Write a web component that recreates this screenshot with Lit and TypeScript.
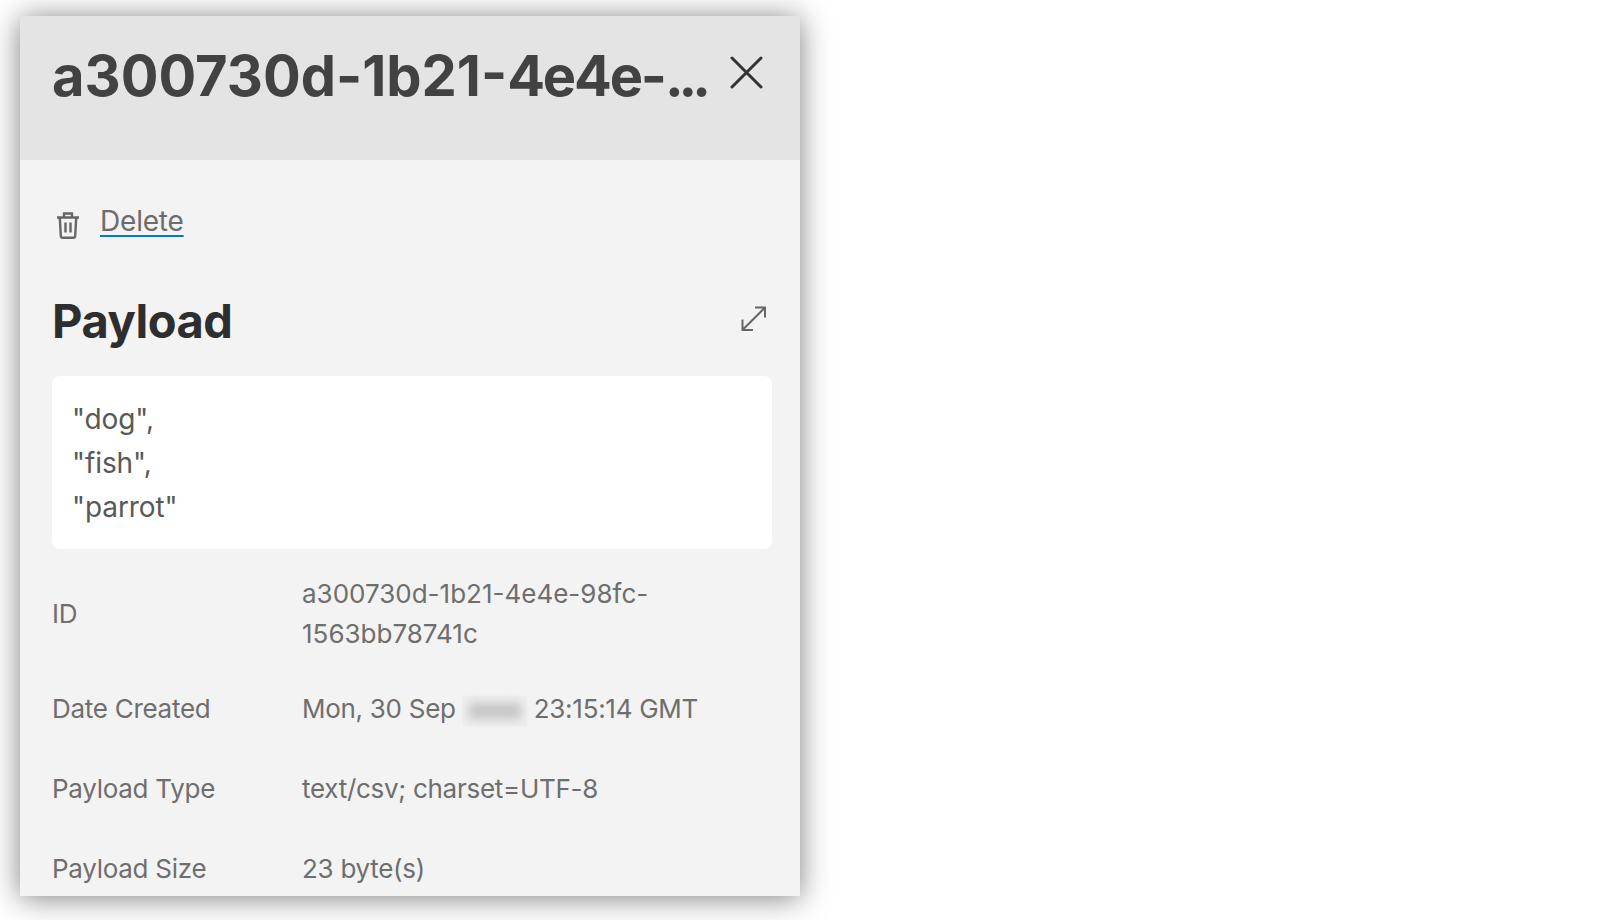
import { LitElement, html, css } from 'lit';
import { customElement, state } from 'lit/decorators.js';

interface Detail {
  label: string;
  value: string;
}

@customElement('app-root')
export class AppRoot extends LitElement {
  static override styles = css`
    :host {
      display: block;
      height: 920px;
      overflow: hidden;
      background: #fff;
      font-family: Inter, 'Liberation Sans', sans-serif;
    }

    .panel {
      width: 780px;
      height: 880px;
      margin: 16px 0 0 20px;
      overflow: hidden;
      background: #f3f3f3;
      box-shadow: 0 2px 28px rgba(0, 0, 0, 0.5);
    }

    header {
      display: flex;
      justify-content: space-between;
      box-sizing: border-box;
      height: 144px;
      padding: 28px 37px 0 32px;
      background: #e4e4e4;
    }

    h1 {
      margin: 0;
      font-size: 56px;
      font-weight: 700;
      line-height: 64px;
      color: #424242;
      white-space: nowrap;
    }

    h1 .tail {
      letter-spacing: -2.2px;
    }

    h1 .dots {
      letter-spacing: -5px;
    }

    .close {
      width: 33px;
      height: 33px;
      margin-top: 12px;
    }

    .content {
      padding: 0 28px 0 32px;
    }

    .delete {
      display: flex;
      align-items: flex-start;
      gap: 21px;
      padding: 0 0 0 5px;
      margin-top: 43px;
      font-size: 28px;
      line-height: 36px;
      letter-spacing: -0.2px;
      color: #6c6c6c;
    }

    .delete svg {
      margin-top: 9px;
      color: #666;
    }

    .delete span {
      text-decoration: underline 2px #0078d4;
      text-underline-offset: 4px;
    }

    .title-row {
      display: flex;
      justify-content: space-between;
      align-items: center;
      margin-top: 52px;
    }

    h2 {
      margin: 0;
      font-size: 47px;
      font-weight: 700;
      line-height: 60px;
      letter-spacing: -0.45px;
      color: #2e2e2e;
    }

    .expand {
      margin: 0 6px 6px 0;
      color: #666;
    }

    .code {
      box-sizing: border-box;
      height: 173px;
      margin-top: 25px;
      padding: 21px 20px 0 20px;
      border-radius: 8px;
      background: #fff;
      font-size: 28px;
      line-height: 44px;
      letter-spacing: -0.1px;
      color: #585858;
    }

    .rows {
      margin-top: 10px;
    }

    .row {
      display: grid;
      grid-template-columns: 250px 1fr;
      align-items: center;
      box-sizing: border-box;
      min-height: 80px;
      padding: 15px 0;
      font-size: 26px;
      line-height: 40px;
      letter-spacing: -0.28px;
      color: #6e6e6e;
    }

    .row .id {
      letter-spacing: 0;
    }

    .blurred {
      display: inline-flex;
      align-items: center;
      justify-content: center;
      width: 64px;
      height: 30px;
      vertical-align: middle;
      background: #eeeeee;
    }

    .blurred i {
      display: block;
      width: 52px;
      height: 16px;
      background: #c6c6c6;
      filter: blur(5px);
    }
  `;

  @state() private payload = ['"dog",', '"fish",', '"parrot"'];

  @state() private details: Detail[] = [
    { label: 'ID', value: 'a300730d-1b21-4e4e-98fc-1563bb78741c' },
    { label: 'Date Created', value: '' },
    { label: 'Payload Type', value: 'text/csv; charset=UTF-8' },
    { label: 'Payload Size', value: '23 byte(s)' },
  ];

  private renderValue(d: Detail) {
    if (d.label === 'ID') {
      return html`<div class="id">${d.value}</div>`;
    }
    if (d.label === 'Date Created') {
      return html`<div>Mon, 30 Sep <span class="blurred"><i></i></span> 23:15:14 GMT</div>`;
    }
    return html`<div>${d.value}</div>`;
  }

  override render() {
    return html`
      <div class="panel">
        <header>
          <h1>a300730d-1b21-<span class="tail">4e4e-</span><span class="dots">...</span></h1>
          <svg class="close" viewBox="0 0 33 33" fill="none" stroke="#333" stroke-width="3" stroke-linecap="round">
            <path d="M2 2l29 29M31 2L2 31" />
          </svg>
        </header>
        <div class="content">
          <div class="delete">
            <svg width="22" height="27" viewBox="0 0 22 27" fill="none" stroke="currentColor" stroke-width="2.4">
              <path d="M0 5.5h22M7 5.5V1.5h8v4M2.8 5.5l1 18.5a2 2 0 0 0 2 1.8h10.4a2 2 0 0 0 2-1.8l1-18.5M8.5 10.5v10M13.5 10.5v10" />
            </svg>
            <span>Delete</span>
          </div>
          <div class="title-row">
            <h2>Payload</h2>
            <svg class="expand" width="25" height="25" viewBox="0 0 25 25" fill="none" stroke="currentColor" stroke-width="2">
              <path d="M1.5 24L24 1.5M14 1.5h10v10M1.5 13.5V24h10.5" />
            </svg>
          </div>
          <div class="code">${this.payload.map((line) => html`<div>${line}</div>`)}</div>
          <div class="rows">
            ${this.details.map(
              (d) => html`
                <div class="row">
                  <div>${d.label}</div>
                  ${this.renderValue(d)}
                </div>
              `
            )}
          </div>
        </div>
      </div>
    `;
  }
}
